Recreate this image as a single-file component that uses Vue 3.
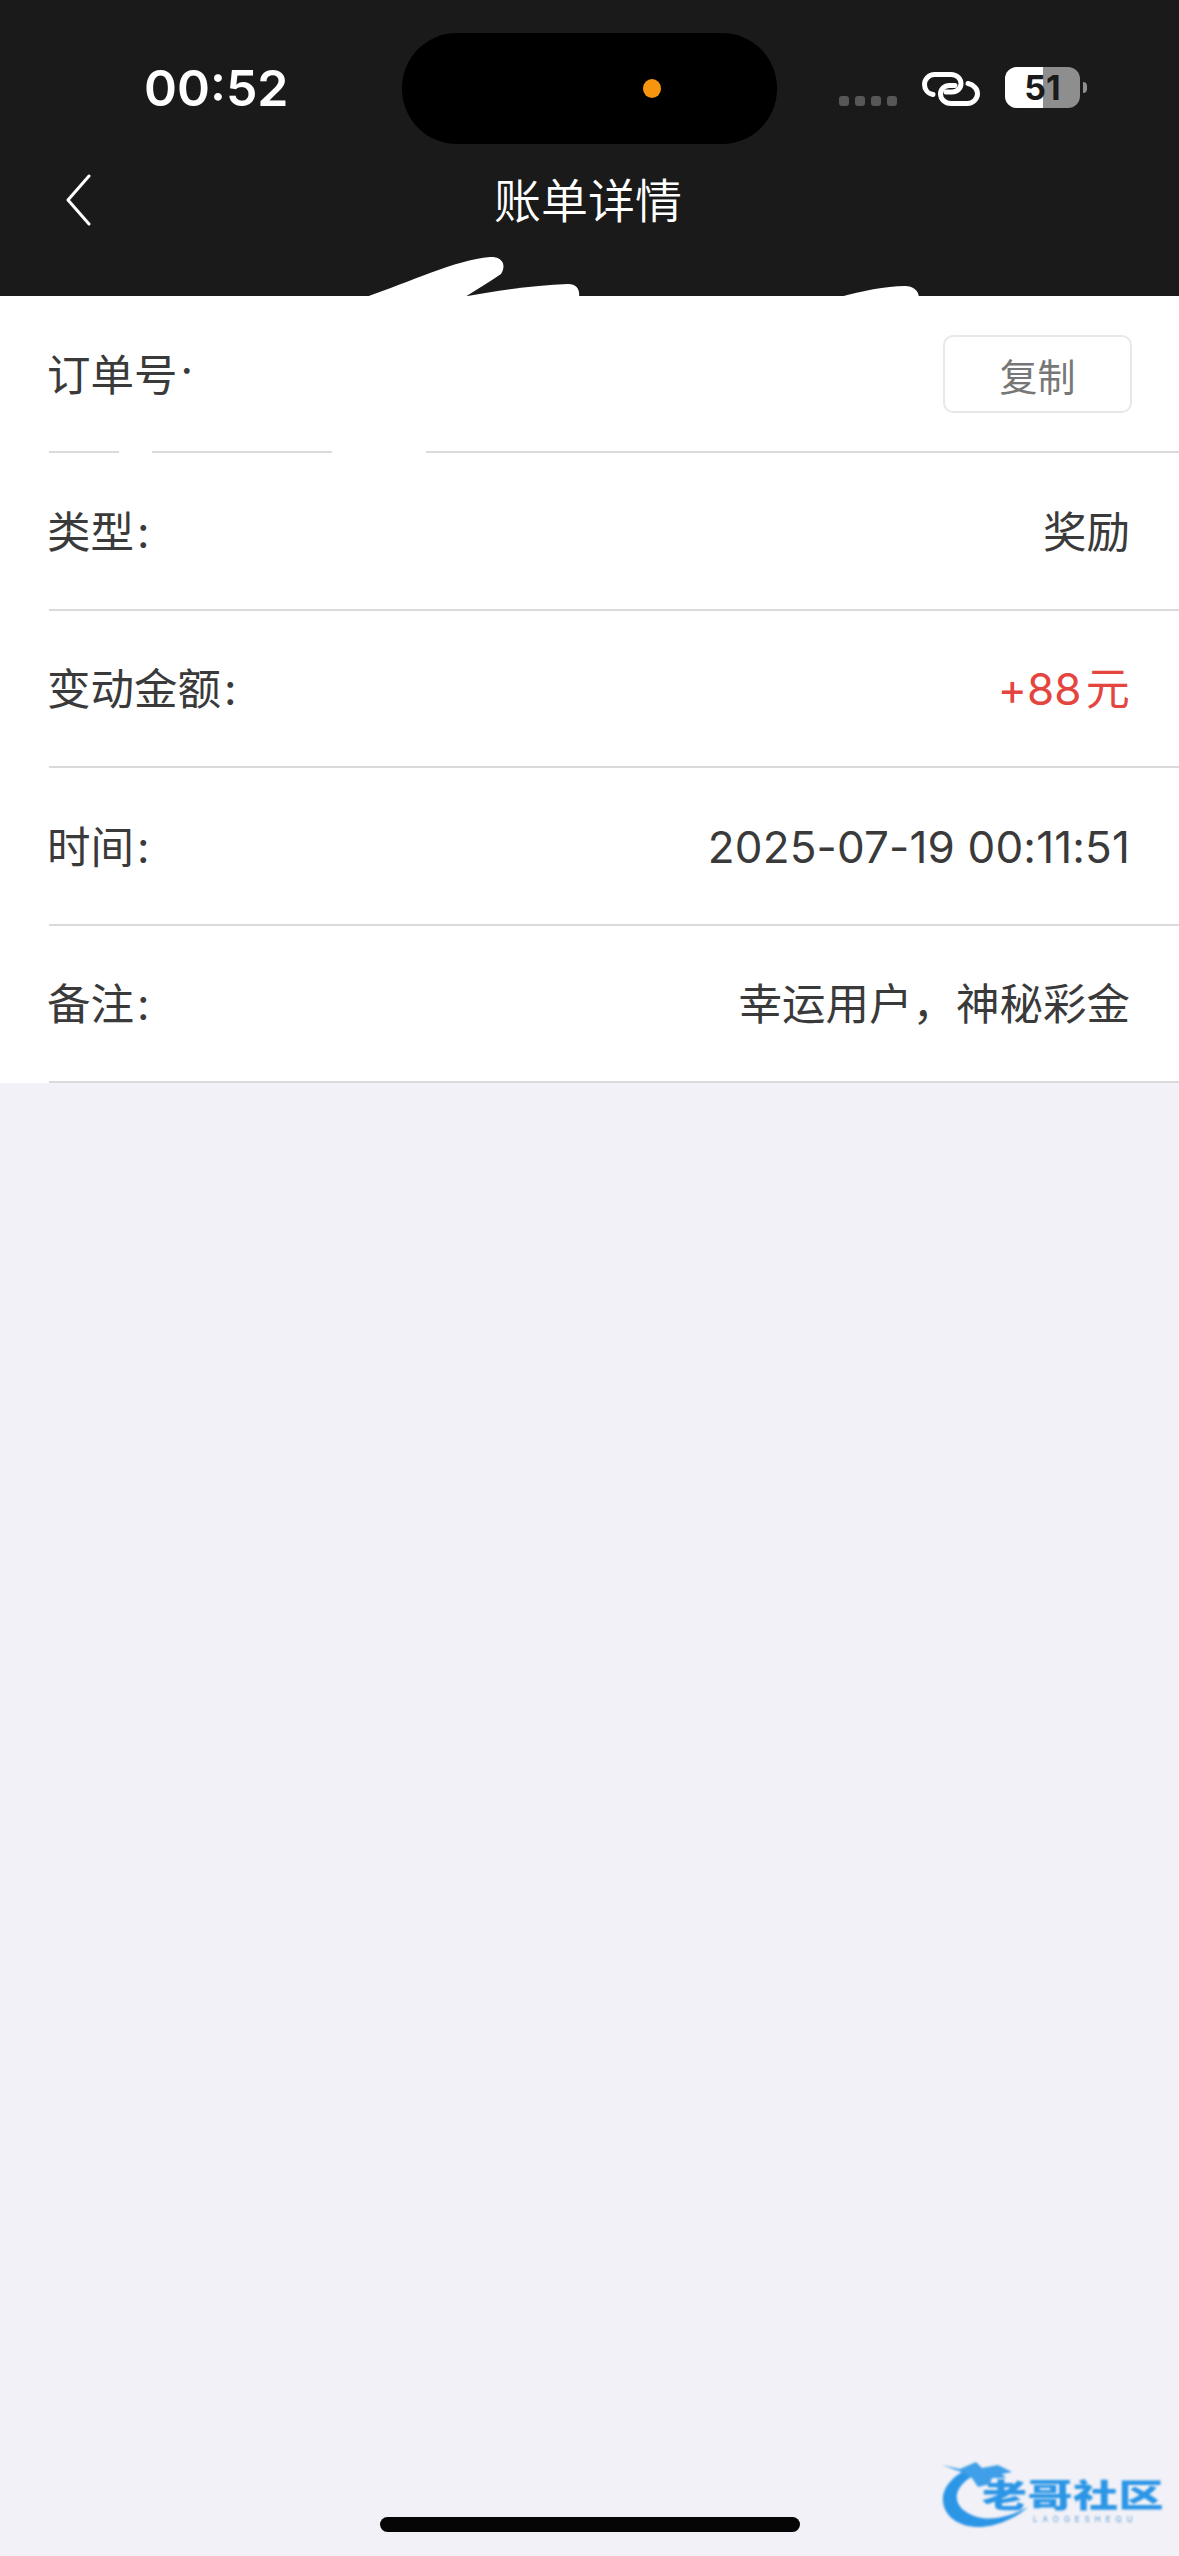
<script setup>
const rows = [
  { label: '类型', value: '奖励' },
  { label: '变动金额', value: '+88\u200A元', red: true, latin: true },
  { label: '时间', value: '2025-07-19 00:11:51', latin: true },
  { label: '备注', value: '幸运用户\uFF0C神秘彩金' }
]
</script>

<template>
  <div class="page">
    <header class="top">
      <div class="status">
        <div class="time">00:52</div>
        <div class="island"><span class="cam"></span></div>
        <div class="sys">
          <div class="dots"><i></i><i></i><i></i><i></i></div>
          <svg class="link" width="58" height="34" viewBox="0 0 58 34" fill="none" stroke="#fff" stroke-width="5" stroke-linecap="round">
            <path d="M11 22.5C5.5 21.5 2.5 17 2.5 12.5C2.5 7 7 2.5 12.5 2.5H29C35 2.5 39 7 39 11.5C39 16.5 35 20 30 20H24" />
            <path d="M46 11.5C51.5 12.5 55.5 17 55.5 21.5C55.5 27 51 31.5 45.5 31.5H29C23 31.5 18.5 27 18.5 22C18.5 17 22.5 13.5 27.5 13.5H33" />
          </svg>
          <div class="battery">
            <div class="cell"><span class="fill"></span><span class="num">51</span></div>
            <span class="nub"></span>
          </div>
        </div>
      </div>
      <nav class="nav">
        <svg class="back" width="25" height="52" viewBox="0 0 25 52" fill="none" stroke="#fff" stroke-width="3" stroke-linecap="round" stroke-linejoin="round">
          <path d="M23 2L2 26L23 50" />
        </svg>
        <div class="title">账单详情</div>
        <div></div>
      </nav>
    </header>

    <main class="list">
      <div class="row">
        <div class="inner">
          <span class="label">订单号<span class="colon">:</span></span>
          <button class="copy">复制</button>
        </div>
      </div>
      <div v-for="r in rows" :key="r.label" class="row">
        <div class="inner">
          <span class="label">{{ r.label }}<span class="colon">:</span></span>
          <span class="value" :class="{ red: r.red, latin: r.latin }">{{ r.value }}</span>
        </div>
      </div>
    </main>

    <svg class="scribble" width="1179" height="480" viewBox="0 0 1179 480" fill="#fff">
      <path d="M366 297C410 282 455 260 490 257C502 256 507 265 501 274C490 282 477 289 465 297Z" />
      <path d="M462 297C495 291 535 285 568 284C577 284 580 290 579 297Z" />
      <path d="M840 297C862 291 885 286 905 286C913 286 918 290 919 297Z" />
      <rect x="119" y="448" width="33" height="8" />
      <rect x="332" y="448" width="94" height="8" />
      <rect x="176" y="374" width="34" height="26" />
    </svg>

    <div class="home"></div>

    <div class="mark">
      <svg class="dragon" width="100" height="70" viewBox="0 0 100 70">
        <path d="M30 8C14 15 2 27 3 41C4 57 20 68 42 67C58 66 76 58 88 47C72 56 56 60 42 58C26 55 15 46 17 34C19 25 28 18 38 13Z" fill="#2b95e6" />
        <path d="M2 5L20 9L36 2L42 8L58 5L72 12L62 14L66 18L52 18L50 24L38 27L32 18L24 13Z" fill="#3f9fe8" />
      </svg>
      <div class="mark-cn">老哥社区</div>
      <div class="mark-en">LAOGESHEQU</div>
    </div>
  </div>
</template>

<style scoped>
.page {
  position: relative;
  width: 1179px;
  height: 2556px;
  overflow: hidden;
  background: #f1f1f7;
  font-family: Inter, "Noto Sans CJK SC", sans-serif;
  color: #3a3a3a;
}
.top {
  height: 296px;
  background: #1a1a1a;
  display: flex;
  flex-direction: column;
  padding-top: 33px;
  box-sizing: border-box;
}
.status {
  display: grid;
  grid-template-columns: 402px 375px 1fr;
  height: 111px;
}
.time {
  padding: 24px 0 0 144px;
  font-size: 50px;
  line-height: 62px;
  font-weight: 600;
  color: #fff;
}
.island {
  position: relative;
  background: #000;
  border-radius: 55px;
}
.cam {
  position: absolute;
  left: 241px;
  top: 46px;
  width: 18px;
  height: 19px;
  border-radius: 50%;
  background: #f7950e;
}
.sys {
  display: flex;
  align-items: flex-start;
  padding: 34px 0 0 62px;
}
.dots {
  display: flex;
  gap: 6px;
  margin-top: 29px;
}
.dots i {
  width: 10px;
  height: 10px;
  border-radius: 3px;
  background: #575757;
}
.link {
  margin: 5px 0 0 25px;
}
.battery {
  display: flex;
  align-items: center;
  margin-left: 25px;
}
.cell {
  position: relative;
  width: 75px;
  height: 41px;
  border-radius: 12px;
  overflow: hidden;
  background: #8e8e8e;
  display: flex;
  align-items: center;
  justify-content: center;
}
.fill {
  position: absolute;
  left: 0;
  top: 0;
  bottom: 0;
  width: 38px;
  background: #fff;
}
.num {
  position: relative;
  font-size: 34px;
  line-height: 41px;
  font-weight: 700;
  color: #1a1a1a;
}
.nub {
  width: 4px;
  height: 11px;
  margin-left: 3px;
  border-radius: 0 4px 4px 0;
  background: #8e8e8e;
}
.nav {
  display: grid;
  grid-template-columns: 1fr auto 1fr;
  align-items: center;
  height: 116px;
  padding-left: 66px;
  padding-right: 66px;
}
.back {
  display: block;
  margin-top: -4px;
}
.title {
  font-size: 47px;
  line-height: 60px;
  margin-top: -8px;
  margin-left: -3px;
  color: #fff;
  font-family: "Noto Sans CJK SC", sans-serif;
  font-weight: 350;
}
.list {
  background: #fff;
}
.row {
  height: 157.4px;
}
.inner {
  box-sizing: border-box;
  height: 100%;
  margin-left: 49px;
  padding-right: 49px;
  display: flex;
  align-items: center;
  justify-content: space-between;
  border-bottom: 2px solid #dadadd;
}
.label,
.value {
  font-size: 43.5px;
  line-height: 56px;
  margin-top: 2px;
  font-family: Inter, "Noto Sans CJK SC", sans-serif;
  font-weight: 400;
}
.value.latin {
  font-size: 44px;
  letter-spacing: 0.15px;
}
.label {
  margin-left: -2px;
}
.colon {
  margin-left: 3px;
}
.value.red {
  color: #e5453f;
}
.copy {
  box-sizing: border-box;
  width: 189px;
  height: 78px;
  margin-top: 1px;
  margin-right: -2px;
  background: #fff;
  border: 2px solid #e8e8ea;
  border-radius: 10px;
  font-family: "Noto Sans CJK SC", sans-serif;
  font-size: 38px;
  font-weight: 400;
  color: #777;
  padding: 0;
}
.scribble {
  position: absolute;
  left: 0;
  top: 0;
  pointer-events: none;
}
.home {
  position: absolute;
  left: 380px;
  top: 2517px;
  width: 420px;
  height: 15px;
  border-radius: 8px;
  background: #050505;
}
.mark {
  position: absolute;
  left: 940px;
  top: 2460px;
  width: 230px;
  height: 72px;
  filter: blur(0.8px);
}
.dragon {
  position: absolute;
  left: 0;
  top: 0;
}
.mark-cn {
  position: absolute;
  left: 42px;
  top: 22px;
  font-family: "Noto Sans CJK SC", sans-serif;
  font-size: 45px;
  line-height: 32px;
  font-weight: 900;
  letter-spacing: 0.5px;
  white-space: nowrap;
  color: #2b95e6;
  transform: scaleY(0.72);
  transform-origin: top left;
}
.mark-en {
  position: absolute;
  left: 93px;
  top: 55px;
  font-family: Inter, sans-serif;
  font-size: 8px;
  line-height: 9px;
  letter-spacing: 5px;
  color: #5e9fd6;
  white-space: nowrap;
}
</style>
